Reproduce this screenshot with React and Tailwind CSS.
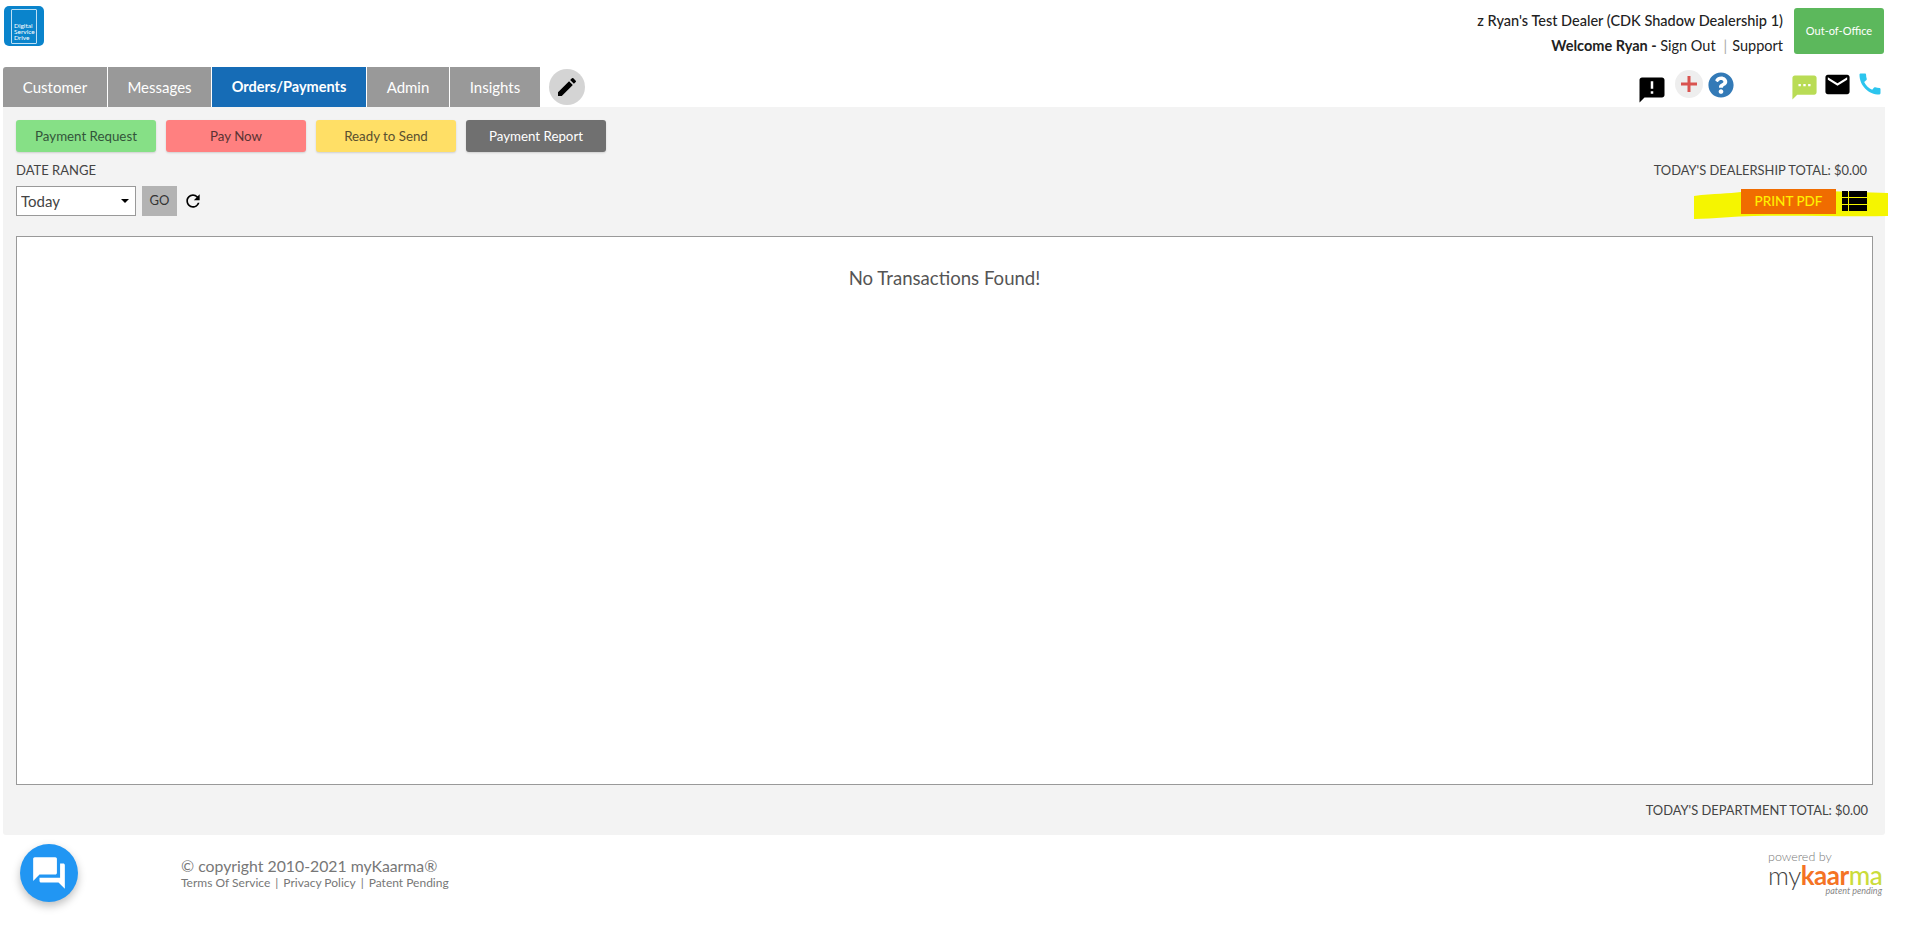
import { MdAnnouncement, MdCall, MdEdit, MdEmail, MdQuestionAnswer, MdRefresh, MdSms } from 'react-icons/md';
import { FaQuestionCircle } from 'react-icons/fa';

const tabs = [
  { label: 'Customer', w: 'w-[104px]' },
  { label: 'Messages', w: 'w-[103px]' },
  { label: 'Orders/Payments', w: 'w-[154px]', active: true },
  { label: 'Admin', w: 'w-[82px]' },
  { label: 'Insights', w: 'w-[90px]' },
];

const actions = [
  { label: 'Payment Request', cls: 'bg-[#86e086] text-[#33553a]' },
  { label: 'Pay Now', cls: 'bg-[#ff8080] text-[#5a3333]' },
  { label: 'Ready to Send', cls: 'bg-[#ffdf66] text-[#5a5030]' },
  { label: 'Payment Report', cls: 'bg-[#707070] text-white' },
];

function DsdLogo() {
  return (
    <div className="w-10 h-10 ml-px mt-[6px] rounded-[5px] bg-[#0a84cc] pt-[3px] pl-[7px]">
      <div className="w-[26px] h-[35px] border border-[#bfe0f4] rounded-[1px] flex flex-col justify-end pl-[2px] pb-[2px] text-[6.5px] leading-[6px] text-white">
        <span>Digital</span>
        <span>Service</span>
        <span>Drive</span>
      </div>
    </div>
  );
}

function ListIcon() {
  return (
    <svg width="25" height="20" viewBox="0 0 25 20" className="relative z-10 ml-[6px] mt-[2px]">
      <rect x="0" y="0" width="6" height="6" fill="#000" />
      <rect x="7" y="0" width="18" height="6" fill="#000" />
      <rect x="0" y="7" width="6" height="6" fill="#000" />
      <rect x="7" y="7" width="18" height="6" fill="#000" />
      <rect x="0" y="14" width="6" height="6" fill="#000" />
      <rect x="7" y="14" width="18" height="6" fill="#000" />
    </svg>
  );
}

export default function App() {
  return (
    <div className="w-[1907px] min-h-[928px] bg-white pl-[3px] pr-[22px] font-['Lato',sans-serif] text-[#333]">
      <header className="h-[67px] flex justify-between">
        <DsdLogo />
        <div className="flex items-start pt-2 pr-px">
          <div className="text-right text-[14.5px] text-[#222] leading-[25px]">
            <div className="font-medium">z Ryan's Test Dealer (CDK Shadow Dealership 1)</div>
            <div>
              <span className="font-bold">Welcome Ryan - </span>
              <span>Sign Out</span>
              <span className="text-[#aaa] ml-2 mr-[5px]">|</span>
              <span>Support</span>
            </div>
          </div>
          <button className="ml-[11px] w-[90px] h-[46px] rounded-[3px] bg-[#5cb85c] text-white text-[11px]">Out-of-Office</button>
        </div>
      </header>

      <div className="h-10 flex">
        {tabs.map((t) => (
          <div
            key={t.label}
            className={`${t.w} mr-px last:mr-0 first:rounded-tl-[3px] flex items-center justify-center text-white ${t.active ? 'bg-[#166cb6] font-bold text-[14.5px]' : 'bg-[#999999] text-[15px]'}`}
          >
            {t.label}
          </div>
        ))}
        <div className="ml-2 mt-[2px] w-9 h-9 rounded-full bg-[#d4d4d4] flex items-center justify-center">
          <MdEdit size={24} className="text-black" />
        </div>
        <div className="ml-auto flex items-start pr-px">
          <MdAnnouncement size={30} className="mt-2 text-black" />
          <div className="ml-2 mt-[3px] w-7 h-7 rounded-full bg-[#eeeeee] flex items-center justify-center">
            <svg width="18" height="18" viewBox="0 0 18 18">
              <path d="M9 1v16M1 9h16" stroke="#d9534f" strokeWidth="3" />
            </svg>
          </div>
          <FaQuestionCircle size={26} className="ml-[5px] mt-[5px] text-[#337ab7]" />
          <MdSms size={29} className="ml-[56px] mt-[6px] text-[#b9dc55]" />
          <MdEmail size={29} className="ml-1 mt-[3px] text-black" />
          <MdCall size={28} className="ml-1 mt-[3px] text-[#2cc5ee]" />
        </div>
      </div>

      <main className="h-[728px] bg-[#f3f3f3] rounded-b-[3px] pl-[13px] pr-3 pt-[13px] flex flex-col">
        <div className="flex gap-[10px]">
          {actions.map((a) => (
            <button key={a.label} className={`w-[140px] h-8 pt-px rounded-[3px] text-[13.3px] shadow-[0_1px_2px_rgba(0,0,0,0.15)] ${a.cls}`}>
              {a.label}
            </button>
          ))}
        </div>

        <div className="mt-[9px] h-5 flex items-center justify-between text-[13px] text-[#444] pr-[6px]">
          <span>DATE RANGE</span>
          <span className="text-[12.9px]">TODAY'S DEALERSHIP TOTAL: $0.00</span>
        </div>

        <div className="mt-[5px] h-[30px] flex items-start relative">
          <div className="relative w-[120px] h-[30px]">
            <select className="w-full h-full appearance-none bg-white border border-[#999] pl-1 text-[15px] text-[#444] rounded-none outline-none">
              <option>Today</option>
            </select>
            <span className="absolute right-[7px] top-[13px] w-0 h-0 border-x-[4px] border-x-transparent border-t-[4px] border-t-black" />
          </div>
          <button className="ml-[6px] w-[35px] h-[30px] bg-[#b3b3b3] text-[13px] text-[#333]">GO</button>
          <MdRefresh size={20} className="ml-[6px] mt-[5px] text-black" />

          <div className="ml-auto flex items-start pr-[6px] mt-[3px]">
            <svg width="194" height="30" viewBox="0 0 194 30" className="absolute right-[-15px] top-[4px]">
              <path d="M0 6 C20 3 35 4 47 2 L100 0 L194 3 L194 26 C150 27 110 25 60 26 C40 26 20 29 0 29 Z" fill="#f5f500" />
            </svg>
            <button className="relative z-10 w-[95px] h-[25px] bg-[#f06c00] font-medium text-[13.5px] text-[#fff000]">PRINT PDF</button>
            <ListIcon />
          </div>
        </div>

        <div className="mt-5 h-[549px] bg-white border border-[#999] text-center pt-[29px] text-[18.6px] leading-6 text-[#555]">
          No Transactions Found!
        </div>

        <div className="mt-4 h-5 flex items-center justify-end text-[12.9px] text-[#444] pr-[5px]">
          TODAY'S DEPARTMENT TOTAL: $0.00
        </div>
      </main>

      <footer className="flex items-start">
        <div className="ml-[17px] mt-[9px] w-[58px] h-[58px] rounded-full bg-[#2196f3] flex items-center justify-center shadow-[0_4px_8px_rgba(0,0,0,0.25)]">
          <MdQuestionAnswer size={38} className="text-white" />
        </div>
        <div className="ml-[103px] mt-[21px] text-[#777]">
          <div className="text-[15.8px] leading-5">© copyright 2010-2021 myKaarma®</div>
          <div className="text-[12px] leading-[14px]">
            Terms Of Service<span className="mx-[5px]">|</span>Privacy Policy<span className="mx-[5px]">|</span>Patent Pending
          </div>
        </div>
        <div className="ml-auto mt-[15px] w-[117px] pr-[3px]">
          <div className="text-[12.5px] leading-[14px] text-[#777] font-light">powered by</div>
          <div className="text-[26px] leading-[22px] tracking-[-0.5px] font-light">
            <span className="text-[#444]">my</span>
            <span className="text-[#f47324] font-bold">kaar</span>
            <span className="text-[#cbdc3a] font-medium">ma</span>
          </div>
          <div className="text-[9px] leading-[10px] italic text-right text-[#888]">patent pending</div>
        </div>
      </footer>
    </div>
  );
}
